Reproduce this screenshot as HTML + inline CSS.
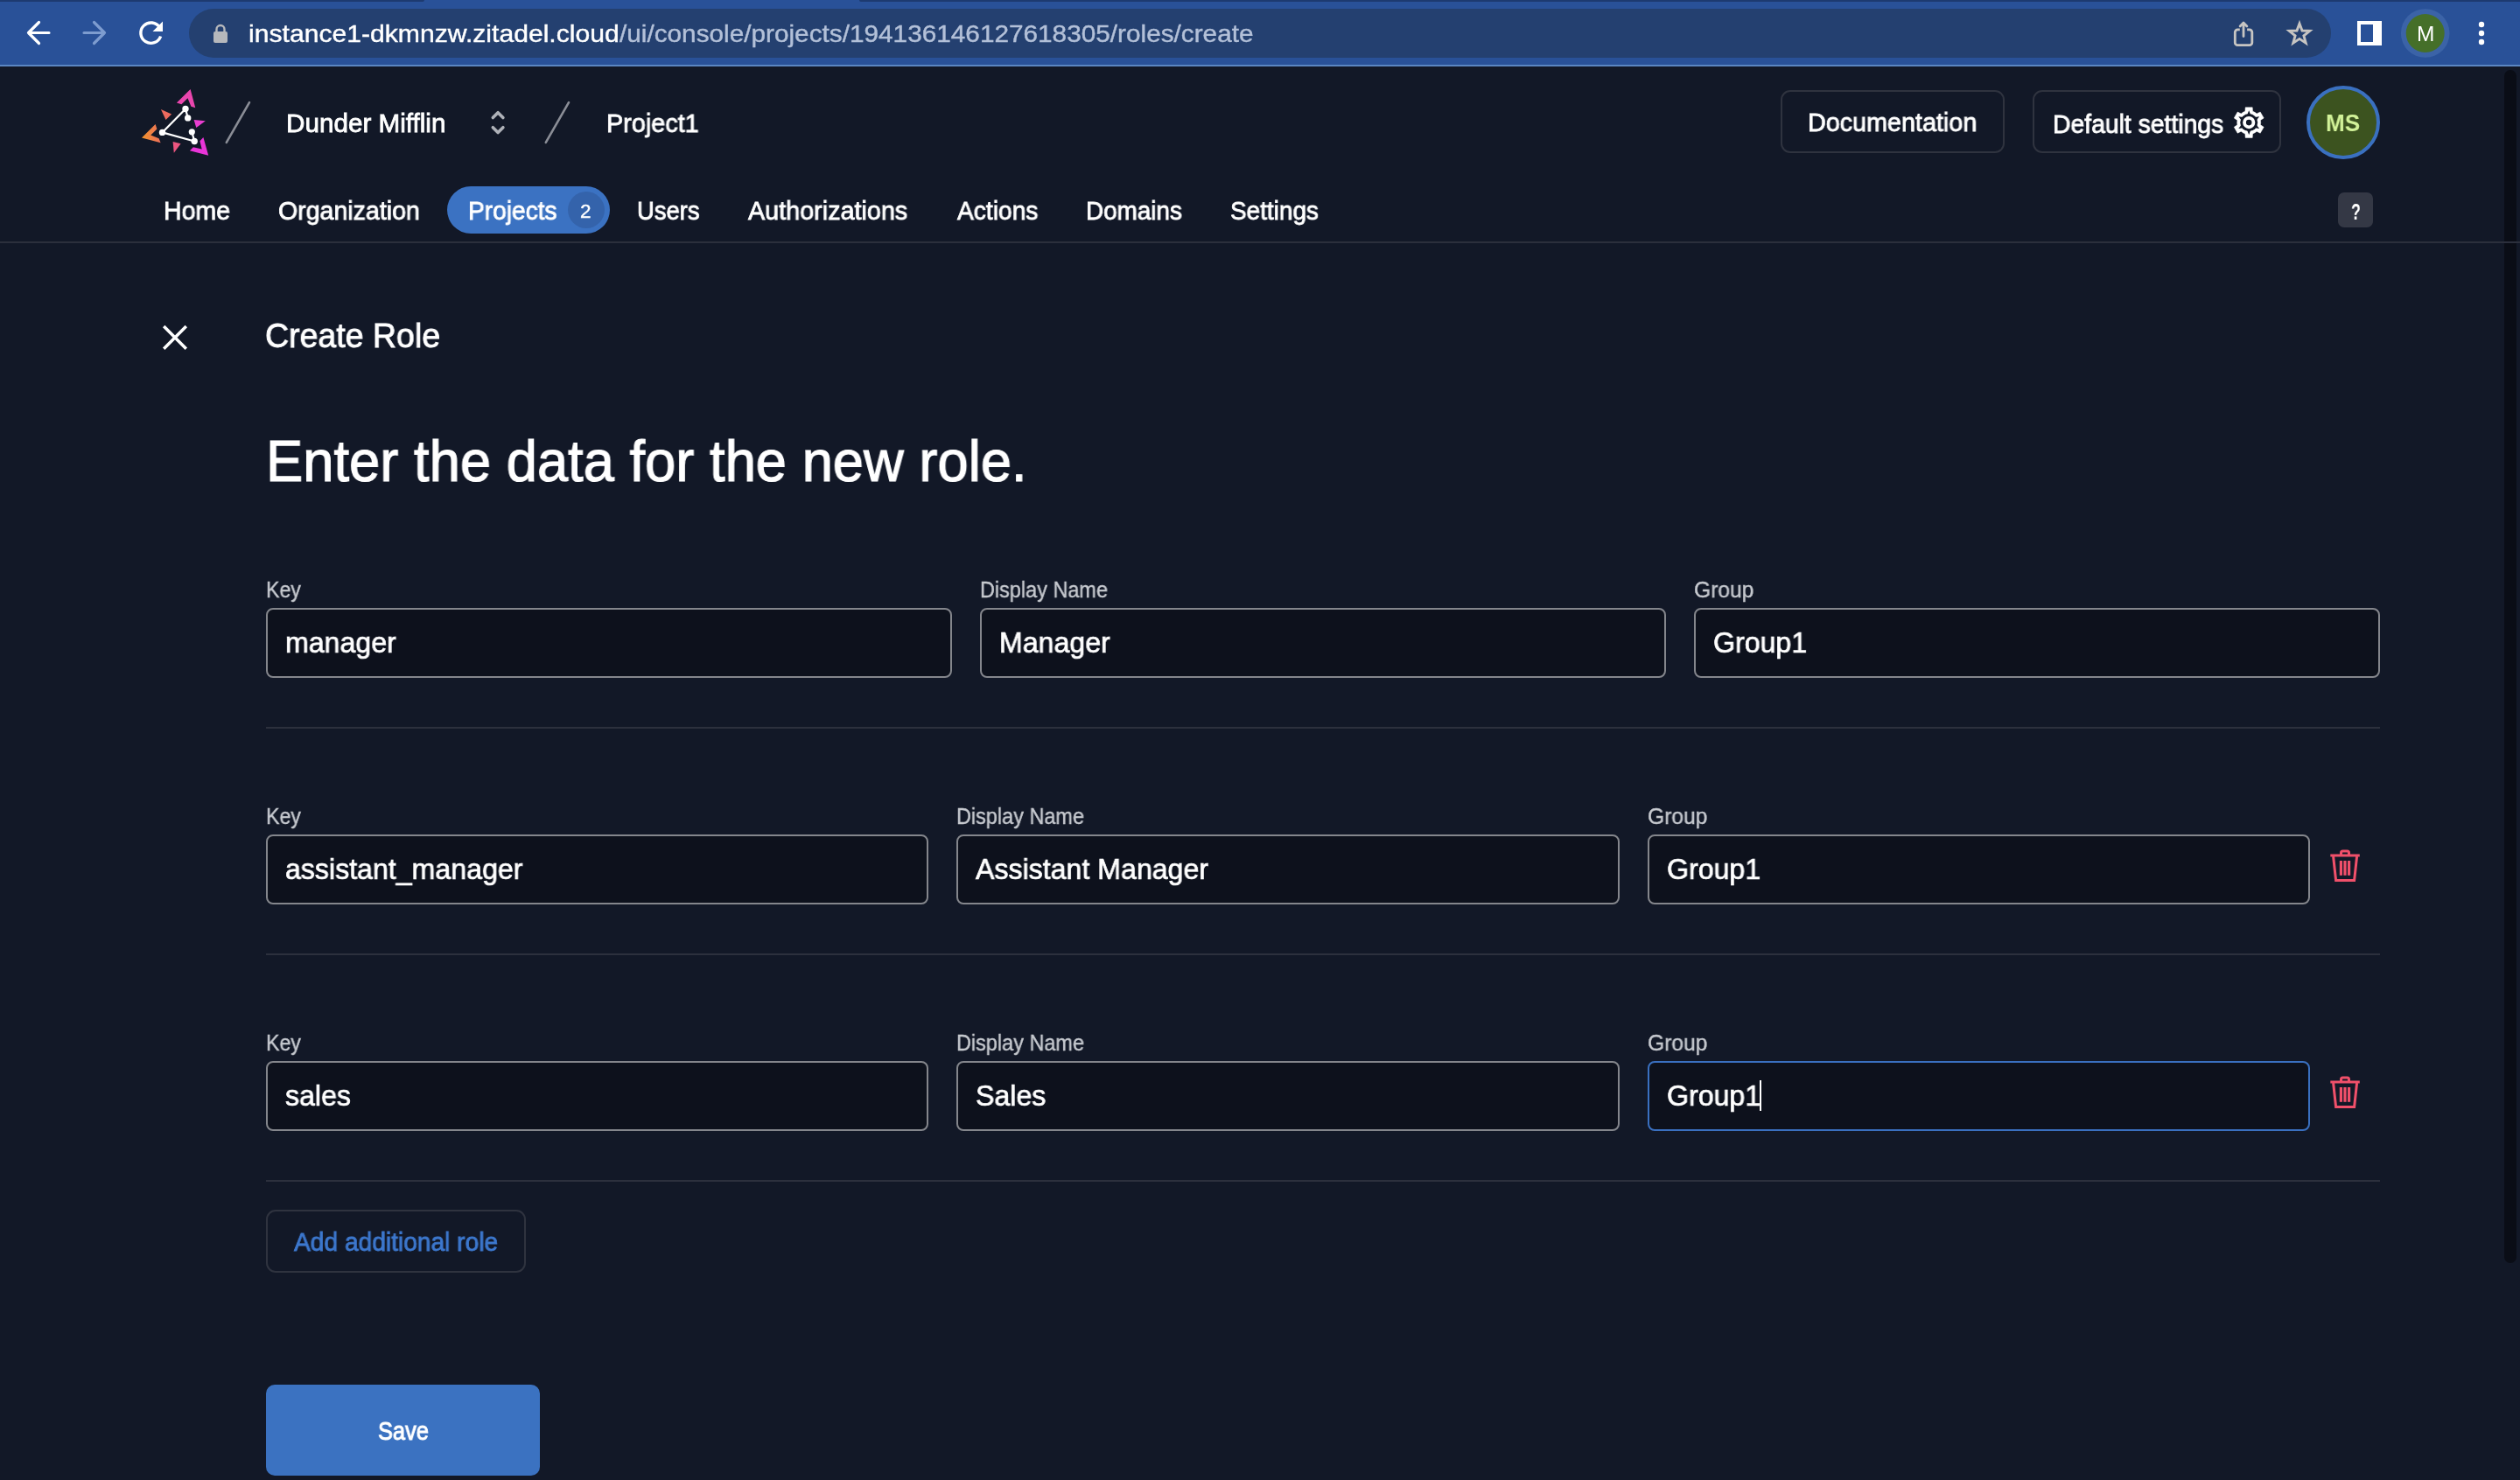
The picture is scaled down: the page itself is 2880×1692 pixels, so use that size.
<!DOCTYPE html>
<html lang="en">
<head>
<meta charset="utf-8">
<title>ZITADEL Console - Create Role</title>
<style>
html,body{margin:0;padding:0;}
body{width:2880px;height:1692px;overflow:hidden;background:#121827;position:relative;font-family:"Liberation Sans",sans-serif;color:#fff;}
.a{position:absolute;box-sizing:border-box;}
.t{position:absolute;white-space:nowrap;line-height:1;transform-origin:0 0;color:#fff;will-change:transform;}
.inp{position:absolute;box-sizing:border-box;height:80px;border:2px solid #84868c;border-radius:8px;background:#0d111c;}
.inp.f{border-color:#3a70c0;}
.hr{position:absolute;left:304px;width:2416px;height:2px;background:#2c303d;}
.btn{position:absolute;box-sizing:border-box;border:2px solid #2f333f;border-radius:11px;}
svg{position:absolute;overflow:visible;}
</style>
</head>
<body>
<!-- browser toolbar -->
<div class="a" style="left:0;top:0;width:2880px;height:76px;background:#295198;"></div>
<div class="a" style="left:0;top:0;width:485px;height:2px;background:#1d3a70;border-bottom-right-radius:2px;"></div>
<div class="a" style="left:982px;top:0;width:1898px;height:2px;background:#1d3a70;border-bottom-left-radius:2px;"></div>
<div class="a" style="left:0;top:74px;width:2880px;height:2px;background:#5b86c2;"></div>
<div class="a" style="left:216px;top:10px;width:2448px;height:56px;border-radius:28px;background:#244070;"></div>
<svg width="2880" height="76" viewBox="0 0 2880 76" style="left:0;top:0">
  <!-- back -->
  <g fill="none" stroke="#fff" stroke-width="3.2" stroke-linecap="round" stroke-linejoin="round">
    <path d="M56 37.5H32.5M44.5 25.5L32.5 37.5L44.5 49.5"/>
  </g>
  <!-- forward -->
  <g fill="none" stroke="#7d9ccf" stroke-width="3.2" stroke-linecap="round" stroke-linejoin="round">
    <path d="M96 37.5H119.5M107.5 25.5L119.5 37.5L107.5 49.5"/>
  </g>
  <!-- reload -->
  <g fill="none" stroke="#fff" stroke-width="3.4">
    <path d="M182.5 31.5A11.7 11.7 0 1 0 183.6 41.5"/>
  </g>
  <path d="M186 24.5V36H174.5Z" fill="#fff"/>
  <!-- lock -->
  <rect x="244" y="36" width="16" height="13" rx="2" fill="#b6b8bc"/>
  <path d="M247.5 37V33.5a4.5 4.5 0 0 1 9 0V37" fill="none" stroke="#b6b8bc" stroke-width="2.4"/>
  <!-- share -->
  <g fill="none" stroke="#c7c5c2" stroke-width="2.8" stroke-linejoin="round">
    <path d="M2559.800 33.800H2557.300a3 3 0 0 0 -3 3V48.700a3 3 0 0 0 3 3H2570.800a3 3 0 0 0 3 -3V36.800a3 3 0 0 0 -3 -3H2568.100" stroke-linecap="butt"/>
    <path d="M2564 41.600V26.400M2560.100 29.900L2564 26L2567.900 29.900" stroke-linecap="round"/>
  </g>
  <!-- star -->
  <path d="M2628.00 26.90L2631.04 35.02L2639.70 35.40L2632.91 40.80L2635.23 49.15L2628.00 44.37L2620.77 49.15L2623.09 40.80L2616.30 35.40L2624.96 35.02Z" fill="none" stroke="#c7c5c2" stroke-width="2.9" stroke-linejoin="miter"/>
  <!-- side panel -->
  <path d="M2694 24H2722V52H2694Z M2698 28V48H2712V28Z" fill="#fff" fill-rule="evenodd"/>
  <!-- avatar -->
  <circle cx="2771.700" cy="38" r="27.8" fill="#3b63a7"/>
  <circle cx="2771.700" cy="38" r="22" fill="#456f29"/>
  <!-- dots -->
  <circle cx="2836" cy="28" r="3.2" fill="#fff"/><circle cx="2836" cy="38" r="3.2" fill="#fff"/><circle cx="2836" cy="48" r="3.2" fill="#fff"/>
</svg>
<!-- scrollbar thumb -->
<div class="a" style="left:2862px;top:80px;width:14px;height:1364px;border-radius:7px;background:#0a0d16;"></div>
<!-- app header -->
<svg width="2880" height="220" viewBox="0 0 2880 220" style="left:0;top:0">
  <defs>
    <linearGradient id="lg1" x1="162" y1="150" x2="238" y2="150" gradientUnits="userSpaceOnUse">
      <stop offset="0" stop-color="#f0932b"/><stop offset="0.45" stop-color="#ec5a78"/><stop offset="1" stop-color="#e934e0"/>
    </linearGradient>
  </defs>
  <!-- logo chevrons -->
  <path d="M217.600 102L201.900 117.400L207.400 119.200L214.500 112.300L218.400 121.800L223.300 123.200Z" fill="#ea46ae"/>
  <path d="M162 157.600L177.600 142L179.400 147.400L172.300 154.500L181.600 158.200L183.600 163.300Z" fill="url(#lg1)"/>
  <path d="M238.200 177.800L232.400 157L228.400 161.300L230.700 170.400L220.900 168.200L216.900 172.300Z" fill="#e935d8"/>
  <!-- small triangles -->
  <path d="M183.900 125L196.100 130.500L189.500 137.100Z" fill="#ee6a5e"/>
  <path d="M221.600 137.100L234.800 138.200L224.300 146.100Z" fill="#e93ed0"/>
  <path d="M197.600 162L206.600 164.300L198.800 174.800Z" fill="#ec5680"/>
  <!-- white graph -->
  <g stroke="#fff" stroke-width="2.2" stroke-linecap="round" fill="none">
    <path d="M212 124.500L185.500 151.400L222.200 161.500M212 124.500L214.700 134.900M219.300 150.800L222.200 161.500"/>
  </g>
  <g fill="#fff">
    <circle cx="212" cy="124.500" r="3.700"/><circle cx="214.700" cy="134.900" r="3.700"/>
    <circle cx="185.500" cy="151.400" r="3.700"/><circle cx="219.300" cy="150.800" r="3.600"/><circle cx="222.200" cy="161.500" r="3.700"/>
  </g>
  <!-- breadcrumb slashes -->
  <g stroke="#8a8d96" stroke-width="2.6" stroke-linecap="round">
    <path d="M285 117.200L258.800 162.800"/>
    <path d="M650 117.200L623.800 162.800"/>
  </g>
  <!-- org switch chevrons -->
  <g stroke="#aeb1b8" stroke-width="3.6" stroke-linecap="round" stroke-linejoin="round" fill="none">
    <path d="M563.300 134.500L569.100 128.700L574.900 134.500"/>
    <path d="M563.300 145.700L569.100 151.500L574.900 145.700"/>
  </g>
  <!-- gear -->
  <g>
    <path d="M2565.90 127.30L2566.20 122.80L2574.20 122.80L2574.50 127.30A13.50 13.50 0 0 1 2579.13 129.98L2583.18 127.99L2587.18 134.91L2583.43 137.43A13.50 13.50 0 0 1 2583.43 142.77L2587.18 145.29L2583.18 152.21L2579.13 150.22A13.50 13.50 0 0 1 2574.50 152.90L2574.20 157.40L2566.20 157.40L2565.90 152.90A13.50 13.50 0 0 1 2561.27 150.22L2557.22 152.21L2553.22 145.29L2556.97 142.77A13.50 13.50 0 0 1 2556.97 137.43L2553.22 134.91L2557.22 127.99L2561.27 129.98A13.50 13.50 0 0 1 2565.90 127.30Z" fill="#fff" stroke="#fff" stroke-width="0.5" stroke-linejoin="round"/>
    <circle cx="2570.2" cy="140.1" r="10.0" fill="#121827"/>
    <path d="M2568.20 131.30L2570.20 126.30L2572.20 131.30ZM2576.82 133.97L2582.15 133.20L2578.82 137.43ZM2578.82 142.77L2582.15 147.00L2576.82 146.23ZM2572.20 148.90L2570.20 153.90L2568.20 148.90ZM2563.58 146.23L2558.25 147.00L2561.58 142.77ZM2561.58 137.43L2558.25 133.20L2563.58 133.97Z" fill="#121827"/>
    <circle cx="2570.2" cy="140.1" r="5.2" fill="none" stroke="#fff" stroke-width="3.8"/>
  </g>
</svg>
<div class="btn" style="left:2035px;top:103px;width:256px;height:72px;"></div>
<div class="btn" style="left:2323px;top:103px;width:284px;height:72px;"></div>
<div class="a" style="left:2636px;top:98px;width:84px;height:84px;border-radius:50%;background:#3c531f;border:4px solid #3a70c0;"></div>
<!-- nav -->
<div class="a" style="left:511px;top:213px;width:186px;height:54px;border-radius:27px;background:#3b72c2;"></div>
<div class="a" style="left:649px;top:219px;width:42px;height:42px;border-radius:50%;background:#3463ab;"></div>
<div class="a" style="left:2672px;top:220px;width:40px;height:40px;border-radius:7px;background:#343845;"></div>
<div class="a" style="left:0;top:276px;width:2880px;height:2px;background:#2b2f3c;"></div>
<!-- close X -->
<svg width="40" height="40" viewBox="0 0 40 40" style="left:180px;top:366px">
  <path d="M7.200 7.100L32.800 32.700M32.800 7.100L7.200 32.700" stroke="#fff" stroke-width="3.5" stroke-linecap="butt" fill="none"/>
</svg>
<!-- row 1 -->
<div class="inp" style="left:304px;top:695px;width:784px;"></div>
<div class="inp" style="left:1120px;top:695px;width:784px;"></div>
<div class="inp" style="left:1936px;top:695px;width:784px;"></div>
<div class="hr" style="top:831px;"></div>
<!-- row 2 -->
<div class="inp" style="left:304px;top:954px;width:757px;"></div>
<div class="inp" style="left:1093px;top:954px;width:758px;"></div>
<div class="inp" style="left:1883px;top:954px;width:757px;"></div>
<div class="hr" style="top:1090px;"></div>
<!-- row 3 -->
<div class="inp" style="left:304px;top:1213px;width:757px;"></div>
<div class="inp" style="left:1093px;top:1213px;width:758px;"></div>
<div class="inp f" style="left:1883px;top:1213px;width:757px;"></div>
<div class="hr" style="top:1349px;"></div>
<div class="a" style="left:2011px;top:1235px;width:2px;height:35px;background:#fff;"></div>
<!-- trash icons -->
<svg width="40" height="44" viewBox="2660 968 40 44" style="left:2660px;top:968px">
  <g fill="none" stroke="#f0506a" stroke-width="3" stroke-linejoin="miter">
    <path d="M2663.300 978H2696.800"/>
    <path d="M2675.500 977V975a2 2 0 0 1 2-2h5a2 2 0 0 1 2 2V977"/>
    <path d="M2666.600 979L2669.600 1006.400H2690.600L2693.600 979"/>
  </g>
  <g fill="#f0506a"><rect x="2673.800" y="984" width="3.200" height="16.800"/><rect x="2678.400" y="984" width="3.200" height="16.800"/><rect x="2683" y="984" width="3.200" height="16.800"/></g>
</svg>
<svg width="40" height="44" viewBox="2660 968 40 44" style="left:2660px;top:1227px">
  <g fill="none" stroke="#f0506a" stroke-width="3" stroke-linejoin="miter">
    <path d="M2663.300 978H2696.800"/>
    <path d="M2675.500 977V975a2 2 0 0 1 2-2h5a2 2 0 0 1 2 2V977"/>
    <path d="M2666.600 979L2669.600 1006.400H2690.600L2693.600 979"/>
  </g>
  <g fill="#f0506a"><rect x="2673.800" y="984" width="3.200" height="16.800"/><rect x="2678.400" y="984" width="3.200" height="16.800"/><rect x="2683" y="984" width="3.200" height="16.800"/></g>
</svg>
<!-- buttons -->
<div class="btn" style="left:304px;top:1383px;width:297px;height:72px;"></div>
<div class="a" style="left:304px;top:1583px;width:313px;height:104px;border-radius:10px;background:#3b72c1;"></div>
<!-- text -->
<span class="t" style="left:284.42px;top:24.6px;font-size:28px;transform:scaleX(1.0762);-webkit-text-stroke:0.4px;">instance1-dkmnzw.zitadel.cloud</span>
<span class="t" style="left:707.6px;top:24.6px;font-size:28px;color:#b3c0d8;transform:scaleX(1.0626);-webkit-text-stroke:0.4px;">/ui/console/projects/194136146127618305/roles/create</span>
<span class="t" style="left:2761.96px;top:27.51px;font-size:23.5px;transform:scaleX(1.0412);">M</span>
<span class="t" style="left:327.15px;top:126.75px;font-size:29px;transform:scaleX(1.0226);-webkit-text-stroke:0.8px;">Dunder Mifflin</span>
<span class="t" style="left:692.51px;top:126.75px;font-size:29px;transform:scaleX(0.9936);-webkit-text-stroke:0.8px;">Project1</span>
<span class="t" style="left:2065.62px;top:126.15px;font-size:29px;transform:scaleX(0.9910);-webkit-text-stroke:0.8px;">Documentation</span>
<span class="t" style="left:2345.85px;top:128.15px;font-size:29px;transform:scaleX(0.9763);-webkit-text-stroke:0.8px;">Default settings</span>
<span class="t" style="left:2657.75px;top:127.12px;font-size:27.5px;font-weight:700;color:#d3f399;transform:scaleX(0.9472);">MS</span>
<span class="t" style="left:186.93px;top:227.45px;font-size:29px;transform:scaleX(0.9834);-webkit-text-stroke:0.8px;">Home</span>
<span class="t" style="left:317.92px;top:227.45px;font-size:29px;transform:scaleX(0.9840);-webkit-text-stroke:0.8px;">Organization</span>
<span class="t" style="left:534.76px;top:227.45px;font-size:29px;transform:scaleX(0.9691);-webkit-text-stroke:0.8px;">Projects</span>
<span class="t" style="left:663.22px;top:230.85px;font-size:22.5px;transform:scaleX(0.9818);-webkit-text-stroke:0.4px;">2</span>
<span class="t" style="left:727.51px;top:227.45px;font-size:29px;transform:scaleX(0.9450);-webkit-text-stroke:0.8px;">Users</span>
<span class="t" style="left:855.4px;top:227.45px;font-size:29px;transform:scaleX(0.9914);-webkit-text-stroke:0.8px;">Authorizations</span>
<span class="t" style="left:1094.3px;top:227.45px;font-size:29px;transform:scaleX(0.9725);-webkit-text-stroke:0.8px;">Actions</span>
<span class="t" style="left:1241.48px;top:227.45px;font-size:29px;transform:scaleX(0.9604);-webkit-text-stroke:0.8px;">Domains</span>
<span class="t" style="left:1406.44px;top:227.45px;font-size:29px;transform:scaleX(0.9634);-webkit-text-stroke:0.8px;">Settings</span>
<span class="t" style="left:2686.63px;top:228.67px;font-size:26.5px;font-weight:700;transform:scaleX(0.6714);">?</span>
<span class="t" style="left:303.01px;top:364.28px;font-size:39.6px;transform:scaleX(0.9473);-webkit-text-stroke:0.9px;">Create Role</span>
<span class="t" style="left:304px;top:494.13px;font-size:66px;transform:scaleX(0.9596);-webkit-text-stroke:1.2px;">Enter the data for the new role.</span>
<span class="t" style="left:303.65px;top:661.64px;font-size:25px;color:#c6c9cf;transform:scaleX(0.9260);-webkit-text-stroke:0.4px;">Key</span>
<span class="t" style="left:1119.52px;top:661.64px;font-size:25px;color:#c6c9cf;transform:scaleX(0.9384);-webkit-text-stroke:0.4px;">Display Name</span>
<span class="t" style="left:1935.62px;top:661.64px;font-size:25px;color:#c6c9cf;transform:scaleX(0.9840);-webkit-text-stroke:0.4px;">Group</span>
<span class="t" style="left:325.7px;top:718.27px;font-size:33px;transform:scaleX(0.9735);-webkit-text-stroke:0.7px;">manager</span>
<span class="t" style="left:1141.7px;top:718.27px;font-size:33px;transform:scaleX(0.9735);-webkit-text-stroke:0.7px;">Manager</span>
<span class="t" style="left:1957.7px;top:718.27px;font-size:33px;transform:scaleX(0.9735);-webkit-text-stroke:0.7px;">Group1</span>
<span class="t" style="left:303.65px;top:920.64px;font-size:25px;color:#c6c9cf;transform:scaleX(0.9260);-webkit-text-stroke:0.4px;">Key</span>
<span class="t" style="left:1092.52px;top:920.64px;font-size:25px;color:#c6c9cf;transform:scaleX(0.9384);-webkit-text-stroke:0.4px;">Display Name</span>
<span class="t" style="left:1882.62px;top:920.64px;font-size:25px;color:#c6c9cf;transform:scaleX(0.9840);-webkit-text-stroke:0.4px;">Group</span>
<span class="t" style="left:325.7px;top:977.27px;font-size:33px;transform:scaleX(0.9735);-webkit-text-stroke:0.7px;">assistant_manager</span>
<span class="t" style="left:1114.7px;top:977.27px;font-size:33px;transform:scaleX(0.9735);-webkit-text-stroke:0.7px;">Assistant Manager</span>
<span class="t" style="left:1904.7px;top:977.27px;font-size:33px;transform:scaleX(0.9735);-webkit-text-stroke:0.7px;">Group1</span>
<span class="t" style="left:303.65px;top:1179.64px;font-size:25px;color:#c6c9cf;transform:scaleX(0.9260);-webkit-text-stroke:0.4px;">Key</span>
<span class="t" style="left:1092.52px;top:1179.64px;font-size:25px;color:#c6c9cf;transform:scaleX(0.9384);-webkit-text-stroke:0.4px;">Display Name</span>
<span class="t" style="left:1882.62px;top:1179.64px;font-size:25px;color:#c6c9cf;transform:scaleX(0.9840);-webkit-text-stroke:0.4px;">Group</span>
<span class="t" style="left:325.7px;top:1236.27px;font-size:33px;transform:scaleX(0.9735);-webkit-text-stroke:0.7px;">sales</span>
<span class="t" style="left:1114.7px;top:1236.27px;font-size:33px;transform:scaleX(0.9735);-webkit-text-stroke:0.7px;">Sales</span>
<span class="t" style="left:1904.7px;top:1236.27px;font-size:33px;transform:scaleX(0.9735);-webkit-text-stroke:0.7px;">Group1</span>
<span class="t" style="left:336px;top:1406.15px;font-size:29px;color:#3d78ce;transform:scaleX(0.9707);-webkit-text-stroke:0.8px;">Add additional role</span>
<span class="t" style="left:431.52px;top:1622.35px;font-size:29px;transform:scaleX(0.8754);-webkit-text-stroke:1px;">Save</span>
</body>
</html>
